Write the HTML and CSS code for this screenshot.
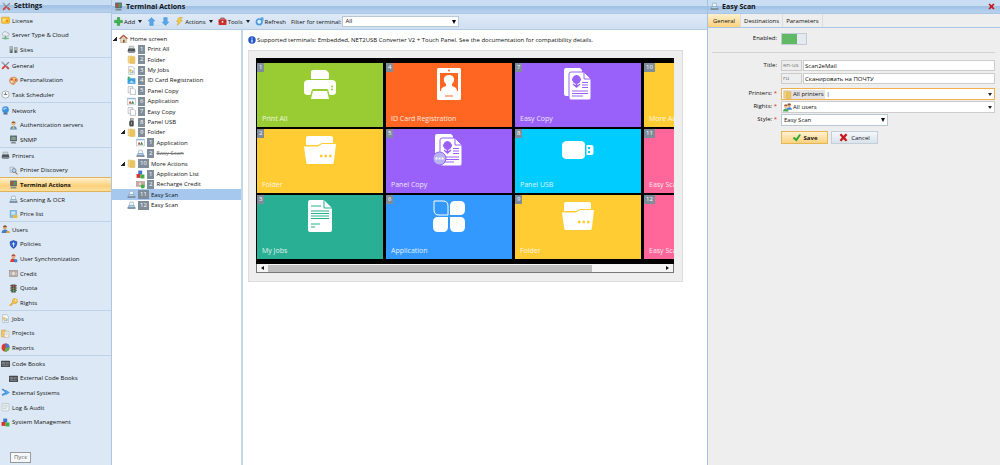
FILE: index.html
```html
<!DOCTYPE html>
<html lang="en">
<head>
<meta charset="utf-8">
<title>Terminal Actions</title>
<link rel="stylesheet" href="styles.css">
</head>
<body>
<svg class="sprite" aria-hidden="true">
  <symbol id="i-tools" viewBox="0 0 16 16"><path d="M2 2l11 12" stroke="#8b96a3" stroke-width="2.6"/><path d="M1 1h3v3H1z" fill="#aab3bd"/><path d="M14 2L8 8" stroke="#7d8894" stroke-width="2.4"/><path d="M8 8l-6 6" stroke="#d9403a" stroke-width="3.2"/><path d="M10 10l4 4" stroke="#c94a3e" stroke-width="3"/></symbol>
  <symbol id="i-license" viewBox="0 0 16 16"><rect x="1" y="2" width="14" height="11" rx="1" fill="#f7c331" stroke="#d99a1b"/><path d="M3 6h5M3 9h4" stroke="#fff3c0" stroke-width="1.5"/><circle cx="11" cy="9" r="2" fill="#e98a1c"/></symbol>
  <symbol id="i-cloud" viewBox="0 0 16 16"><path d="M3 8a3 3 0 0 1 1-5 4 4 0 0 1 7 0 3 3 0 0 1 1 6H4z" fill="#e5eaee" stroke="#8d99a5"/><path d="M8 9v4M2 13h12" stroke="#5da061" stroke-width="1.6"/><rect x="6" y="11" width="4" height="4" fill="#6fb773"/></symbol>
  <symbol id="i-sites" viewBox="0 0 16 16"><path d="M1 2h6v12H1zM9 4h6v10H9z" fill="#8c989c"/><path d="M2 4h4M2 6h4M10 6h4M10 8h4" stroke="#dbe4e6"/><path d="M3 10h2v4H3zM11 10h2v4h-2z" fill="#3e5a42"/></symbol>
  <symbol id="i-palette" viewBox="0 0 16 16"><path d="M8 2c5 0 8 3 7 7-1 2-3 1-4 2s0 4-3 4C4 15 1 12 1 8s3-6 7-6z" fill="#e9a66d" stroke="#b9703c"/><circle cx="5" cy="6" r="1.6" fill="#d63a2e"/><circle cx="9" cy="5" r="1.6" fill="#f8e25e"/><circle cx="12" cy="7" r="1.5" fill="#d74632"/><circle cx="5" cy="10" r="1.5" fill="#fff"/></symbol>
  <symbol id="i-clock" viewBox="0 0 16 16"><circle cx="8" cy="8" r="6.5" fill="#f6f7f8" stroke="#9ba3aa" stroke-width="1.4"/><path d="M8 4v4H5M8 8l3 0" fill="none" stroke="#555" stroke-width="1.3"/></symbol>
  <symbol id="i-globe" viewBox="0 0 16 16"><circle cx="8" cy="6.500" r="6" fill="#3f91dd"/><path d="M4 4c2-2 5-2 7 0-2 2-4 1-5 3-1 1-2-1-2-3z" fill="#9fd1f4"/><path d="M5 12h6l1 3H4z" fill="#5a6f86"/></symbol>
  <symbol id="i-user" viewBox="0 0 16 16"><circle cx="8" cy="4.500" r="3.5" fill="#e7b184"/><path d="M4.500 4c0-4 7-4 7 0-2-1-5-1-7 0z" fill="#7a4a23"/><path d="M2 15c0-8 12-8 12 0z" fill="#4b8ed0"/><path d="M7 9h2l1 5H6z" fill="#f0b23c"/></symbol>
  <symbol id="i-terminal" viewBox="0 0 16 16"><rect x="2" y="1" width="12" height="10" fill="#5c6a70"/><rect x="4" y="3" width="4" height="6" fill="#c8433c"/><rect x="8" y="3" width="4" height="6" fill="#49a05c"/><path d="M4 12h8l2 3H2z" fill="#7f8a90"/></symbol>
  <symbol id="i-snmp" viewBox="0 0 16 16"><rect x="2" y="1" width="12" height="10" fill="#536067"/><rect x="4" y="3" width="8" height="6" fill="#87a191"/><path d="M5 12h6l2 3H3z" fill="#7f8a90"/></symbol>
  <symbol id="i-printer" viewBox="0 0 16 16"><path d="M4 2h8v5H4z" fill="#d6dadd" stroke="#8d9499"/><path d="M2 6h12l1 6H1z" fill="#4f555a"/><path d="M3 11h10l1 3H2z" fill="#8c9297"/></symbol>
  <symbol id="i-discover" viewBox="0 0 16 16"><path d="M2 2h7v9H2z" fill="#dfe7ee" stroke="#8a97a3"/><circle cx="9" cy="8" r="3.500" fill="#b9d8ee" stroke="#66788a" stroke-width="1.4"/><path d="M11 11l4 4" stroke="#a8743c" stroke-width="2"/></symbol>
  <symbol id="i-scanner" viewBox="0 0 16 16"><path d="M5 2l6 0 1 6H4z" fill="#f1f6fa" stroke="#7f99b0"/><path d="M3 7h10l2 6H1z" fill="#8fb2d2"/><path d="M1 11h14v3H1z" fill="#7a8a99"/><path d="M4 10h8" stroke="#e8f4ff"/></symbol>
  <symbol id="i-price" viewBox="0 0 16 16"><rect x="2" y="1" width="11" height="12" fill="#7fc1e8" stroke="#5b9cc5"/><path d="M4 4h7M4 7h7" stroke="#fff" stroke-width="1.5"/><path d="M7 9h8v5H7z" fill="#f2b740"/></symbol>
  <symbol id="i-users" viewBox="0 0 16 16"><circle cx="7" cy="4.500" r="3.300" fill="#e0a06c"/><path d="M3.500 4c0-4 7-4 7 0-2-1-5-1-7 0z" fill="#5f3a1e"/><path d="M1 14c0-8 12-8 12 0z" fill="#3f7fc7"/><path d="M9 14c0-5 7-5 7 0z" fill="#e4a045"/></symbol>
  <symbol id="i-team" viewBox="0 0 16 16"><circle cx="11" cy="4" r="3" fill="#e0a06c"/><path d="M8 3c0-3 6-3 6 0z" fill="#5f3a1e"/><path d="M6 12c0-6 10-6 10 0z" fill="#3f7fc7"/><circle cx="5" cy="6" r="3" fill="#efb787"/><path d="M2 5c0-3 6-3 6 0z" fill="#8b3a20"/><path d="M0 15c0-7 10-7 10 0z" fill="#4da45a"/></symbol>
  <symbol id="i-shield" viewBox="0 0 16 16"><path d="M8 1l6 2c0 6-1 9-6 12C3 12 2 9 2 3z" fill="#2c5fd0" stroke="#1b3f96"/><path d="M8 4v8M5 7h6" stroke="#dce8ff" stroke-width="1.6"/></symbol>
  <symbol id="i-sync" viewBox="0 0 16 16"><circle cx="8" cy="4.500" r="3.500" fill="#e7a67c"/><path d="M4.500 4c0-4 7-4 7 0-2-1-5-1-7 0z" fill="#a33620"/><path d="M2 14c0-8 10-8 11 0z" fill="#d6402f"/><circle cx="12" cy="12" r="3.200" fill="#3f86d8"/></symbol>
  <symbol id="i-credit" viewBox="0 0 16 16"><rect x="1" y="3" width="14" height="10" fill="#b7aaa5" stroke="#90827e"/><circle cx="8" cy="8" r="3" fill="#e4dcd8"/><path d="M3 5v6M13 5v6" stroke="#e4dcd8"/></symbol>
  <symbol id="i-quota" viewBox="0 0 16 16"><rect x="4" y="1" width="8" height="14" rx="1" fill="#454b46"/><path d="M2 3h2M2 7h2M2 11h2M12 3h2M12 7h2M12 11h2" stroke="#454b46" stroke-width="2"/><circle cx="8" cy="4" r="1.800" fill="#e0483c"/><circle cx="8" cy="8" r="1.800" fill="#a1903e"/><circle cx="8" cy="12" r="1.800" fill="#4fba5a"/></symbol>
  <symbol id="i-key" viewBox="0 0 16 16"><circle cx="10.500" cy="5.500" r="4.500" fill="#f6c445" stroke="#d8982a"/><circle cx="12" cy="4" r="1.300" fill="#fff"/><path d="M7 8l-6 6M4 11l2 2" stroke="#e2a62f" stroke-width="2.200"/></symbol>
  <symbol id="i-job" viewBox="0 0 16 16"><path d="M3 1h7l3 3v11H3z" fill="#f8fafb" stroke="#9aa7b2"/><rect x="4" y="6" width="4" height="4" fill="#e9b53c"/><path d="M5 12h6" stroke="#7fae6d" stroke-width="1.400"/><rect x="9" y="8" width="2.500" height="4" fill="#86b3dd"/></symbol>
  <symbol id="i-project" viewBox="0 0 16 16"><path d="M1 2h7v12H1z" fill="#f2ca62" stroke="#cf9c34"/><path d="M6 4h8v11H6z" fill="#f7f3e7" stroke="#b4ad98"/><path d="M8 7h4M8 10h4" stroke="#9cb5cd"/></symbol>
  <symbol id="i-pie" viewBox="0 0 16 16"><circle cx="8" cy="8" r="7" fill="#db3b32"/><path d="M8 8V1a7 7 0 0 1 7 7z" fill="#3f7fdc"/><path d="M8 8h7a7 7 0 0 1-9 7z" fill="#55b84e"/></symbol>
  <symbol id="i-code" viewBox="0 0 16 16"><rect x="0" y="3" width="16" height="11" rx="1" fill="#3c4045"/><path d="M2 5v5M4 5v5M6 5v5M9 5v5M11 5v5M14 5v5M2 12h12" stroke="#c5c9cd"/></symbol>
  <symbol id="i-flow" viewBox="0 0 16 16"><path d="M2 2l8 5M2 13l8-5" stroke="#3e8ad3" stroke-width="3"/><path d="M8 3l8 5-8 5z" fill="#4da2ea"/></symbol>
  <symbol id="i-log" viewBox="0 0 16 16"><path d="M2 1h12v13H2z" fill="#f3f6f6" stroke="#a8b2b8"/><path d="M4 4h8M4 7h8M4 10h6" stroke="#9eb5a9"/></symbol>
  <symbol id="i-cubes" viewBox="0 0 16 16"><path d="M4 1h7v7H4z" fill="#3f73d4"/><path d="M1 7h7v7H1z" fill="#d8322c"/><path d="M8 8h7v7H8z" fill="#3fae49"/></symbol>
  <symbol id="i-plus" viewBox="0 0 16 16"><path d="M6 1h4v5h5v4h-5v5H6v-5H1V6h5z" fill="#39b54a" stroke="#2c8f3a"/></symbol>
  <symbol id="i-up" viewBox="0 0 16 16"><path d="M8 1l6 6h-3v8H5V7H2z" fill="#58a6e8" stroke="#4a95d8"/></symbol>
  <symbol id="i-down" viewBox="0 0 16 16"><path d="M8 15l6-6h-3V1H5v8H2z" fill="#58a6e8" stroke="#4a95d8"/></symbol>
  <symbol id="i-bolt" viewBox="0 0 16 16"><path d="M7 1h6L9 6h4L4 15l2-7H3z" fill="#f8cf45" stroke="#cf9f2b"/></symbol>
  <symbol id="i-box" viewBox="0 0 16 16"><path d="M5 4V2h6v2" fill="none" stroke="#7a2320" stroke-width="1.500"/><rect x="1" y="4" width="14" height="10" rx="1" fill="#cf302a"/><path d="M1 8h14" stroke="#8b1f1b"/><rect x="6.500" y="7" width="3" height="3" fill="#eee"/></symbol>
  <symbol id="i-refresh" viewBox="0 0 16 16"><circle cx="7.500" cy="8.500" r="5" fill="#d9ecfa" stroke="#4a9ade" stroke-width="3"/><path d="M9 1h6v6z" fill="#4a9ade"/></symbol>
  <symbol id="i-home" viewBox="0 0 16 16"><path d="M3 7h10v8H3z" fill="#efe2cc" stroke="#a08360"/><path d="M0 8l8-7 8 7-2 1-6-5-6 5z" fill="#a24e31"/><path d="M7 10h3v5H7z" fill="#80532f"/></symbol>
  <symbol id="i-folder" viewBox="0 0 16 16"><path d="M2 2h7v12H2z" fill="#f5d886" stroke="#d9b265"/><path d="M8 3h6v12H6V5z" fill="#efc45b" stroke="#d9b265"/></symbol>
  <symbol id="i-card" viewBox="0 0 16 16"><rect x="1" y="4" width="14" height="10" fill="#3e9fdd"/><path d="M4 12l4-4 5 4z" fill="#bfe4fa"/><path d="M3 1v5M1 3h5" stroke="#3fb04a" stroke-width="2"/></symbol>
  <symbol id="i-copy" viewBox="0 0 16 16"><path d="M2 1h8v11H2z" fill="#f7f8f9" stroke="#9aa3ab"/><path d="M6 4h6l3 3v8H6z" fill="#fff" stroke="#8c96a0"/></symbol>
  <symbol id="i-app" viewBox="0 0 16 16"><rect x="1" y="2" width="14" height="12" fill="#fff" stroke="#9eb1c2"/><path d="M1 3h14" stroke="#8ab0d8" stroke-width="2"/><path d="M4 12V8h3v4z" fill="#cf3d34"/><path d="M7 12l3-6 3 6z" fill="#4a8e56"/></symbol>
  <symbol id="i-usb" viewBox="0 0 16 16"><rect x="6" y="1" width="5" height="4" fill="#b7bcc0" stroke="#777"/><rect x="4" y="5" width="8" height="10" rx="2" fill="#484b4e"/><path d="M8 7v5" stroke="#ddd"/></symbol>
  <symbol id="i-recharge" viewBox="0 0 16 16"><rect x="1" y="3" width="14" height="8" fill="#c6aca3" stroke="#a08a82"/><circle cx="7" cy="7" r="2" fill="#e9dcd6"/><circle cx="12" cy="11.500" r="3.500" fill="#3fae49"/></symbol>
  <symbol id="i-info" viewBox="0 0 16 16"><circle cx="8" cy="8" r="7.500" fill="#2456c8"/><path d="M8 7v6" stroke="#fff" stroke-width="2.400"/><circle cx="8" cy="4.200" r="1.400" fill="#fff"/></symbol>
  <symbol id="i-check" viewBox="0 0 16 16"><path d="M1 9l4-2 2 3 6-8 3 1-8 12z" fill="#27a52f"/></symbol>
  <symbol id="i-cross" viewBox="0 0 16 16"><path d="M1 3l3-2 4 4 4-4 3 2-4 5 4 5-3 2-4-4-4 4-3-2 4-5z" fill="#c8191e"/></symbol>

  <symbol id="t-print" viewBox="0 0 32 32"><path d="M7 4q0-2 2-2h13l3 3v6H7z" fill="#fff"/><path d="M0 16q0-4 4-4h24q4 0 4 4v8q0 3-4 3h-3l-2-6H9l-2 6H4q-4 0-4-3z" fill="#fff"/><path d="M9 23h14l2 8H7z" fill="#fff"/><path d="M6.500 28l2-6.500h15l2 6.500" fill="none" stroke="#99cc33"/><path d="M7 11.500h18" stroke="#99cc33"/><circle cx="28" cy="18.500" r="1" fill="#99cc33"/><circle cx="28" cy="21.500" r="1" fill="#99cc33"/></symbol>
  <symbol id="t-card" viewBox="0 0 32 32"><rect x="4" y="0" width="24" height="32" rx="1.500" fill="#fff"/><path d="M7 5h18v18H7z" fill="#ff6622"/><path d="M8 23c0-4 3-4 5-5v-2c-4-4-2-9 3-9s7 5 3 9v2c2 1 5 1 5 5z" fill="#fff"/><circle cx="16" cy="2.500" r="1" fill="#ff6622"/><path d="M12 28h8" stroke="#ff6622"/></symbol>
  <symbol id="t-copy" viewBox="0 0 32 32"><path d="M4 0h14l2 2v2H9v24H4q-2 0-2-2V2q0-2 2-2z" fill="#fff"/><path d="M9 4h13l7 7v19q0 2-2 2H9q-2 0-2-2V6q0-2 2-2z" fill="#fff" stroke="#9961fa"/><path d="M22 4v7h7" fill="none" stroke="#9961fa"/><path d="M14.500 7v9M10 11.500h9M11.500 8.500l6 6M17.500 8.500l-6 6" stroke="#9961fa" stroke-width="2.500"/><path d="M14.500 15v5M11 16l3.500 3 3.500-3" fill="none" stroke="#9961fa" stroke-width="1.500"/><path d="M20 14.500h6M20 17h6M20 19.500h6M10 23h16M10 25.500h16M10 28h11" stroke="#9961fa"/></symbol>
  <symbol id="t-panel" viewBox="0 0 32 32"><use href="#t-copy"/><circle cx="6.500" cy="24.500" r="6.500" fill="#b8b4f4" stroke="#9961fa"/><path d="M2.500 24.500h2M5.500 24.500h2M8.500 24.500h2" stroke="#fff" stroke-width="2"/></symbol>
  <symbol id="t-folder" viewBox="0 0 32 32"><path d="M2 4q0-2 2-2h23q2 0 2 2v5H18l-4 2H2z" fill="#fff"/><path d="M0 12.500h14l4-2.500h14l-2 17q0 3-2 3H4q-2 0-2-3z" fill="#fff"/><path d="M16 22h2.500M20.500 22H23M25 22h2.500" stroke="#fc3" stroke-width="2.500"/></symbol>
  <symbol id="t-usb" viewBox="0 0 32 32"><path d="M4 7h16q3 1 3 3v12q0 2-3 3H4q-4-1-4-4V11q0-3 4-4z" fill="#fff"/><path d="M24.500 11h5q2 0 2 2v6q0 2-2 2h-5z" fill="#fff"/><path d="M26 13h2v2h-2zM26 17h2v2h-2z" fill="#00ccff"/></symbol>
  <symbol id="t-job" viewBox="0 0 32 32"><path d="M6 0h14l8 8v22q0 2-2 2H6q-2 0-2-2V2q0-2 2-2z" fill="#fff"/><path d="M20 0v8h8" fill="none" stroke="#29af94"/><path d="M7 6h10M7 11h18M7 13.500h18M7 16h18M7 18.500h18M7 24h9M7 27h4" stroke="#29af94" stroke-width="1.200"/></symbol>
  <symbol id="t-app" viewBox="0 0 32 32"><path d="M1 1h9q5 0 5 5v9H6q-5 0-5-5z" fill="none" stroke="#fff"/><path d="M17 6q0-5 5-5h5q5 0 5 5v4q0 5-5 5H17zM5 17h10v10q0 5-5 5H5q-5 0-5-5v-5q0-5 5-5zM17 17h10q5 0 5 5v5q0 5-5 5h-5q-5 0-5-5z" fill="#fff"/></symbol>
</svg>

<div class="app">
  <aside class="side">
    <h2 class="bar"><svg class="ico"><use href="#i-tools"/></svg>Settings</h2>
    <nav class="nav" aria-label="Settings">
      <ul class="group">
        <li><a href="#"><svg class="ico"><use href="#i-license"/></svg>License</a></li>
        <li><a href="#"><svg class="ico"><use href="#i-cloud"/></svg>Server Type &amp; Cloud</a></li>
        <li class="sub"><a href="#"><svg class="ico"><use href="#i-sites"/></svg>Sites</a></li>
      </ul>
      <ul class="group">
        <li><a href="#"><svg class="ico"><use href="#i-tools"/></svg>General</a></li>
        <li class="sub"><a href="#"><svg class="ico"><use href="#i-palette"/></svg>Personalization</a></li>
        <li><a href="#"><svg class="ico"><use href="#i-clock"/></svg>Task Scheduler</a></li>
      </ul>
      <ul class="group">
        <li><a href="#"><svg class="ico"><use href="#i-globe"/></svg>Network</a></li>
        <li class="sub"><a href="#"><svg class="ico"><use href="#i-user"/></svg>Authentication servers</a></li>
        <li class="sub"><a href="#"><svg class="ico"><use href="#i-snmp"/></svg>SNMP</a></li>
      </ul>
      <ul class="group">
        <li><a href="#"><svg class="ico"><use href="#i-printer"/></svg>Printers</a></li>
        <li class="sub"><a href="#"><svg class="ico"><use href="#i-discover"/></svg>Printer Discovery</a></li>
        <li class="sub current"><a href="#" aria-current="page"><svg class="ico"><use href="#i-terminal"/></svg>Terminal Actions</a></li>
        <li class="sub"><a href="#"><svg class="ico"><use href="#i-scanner"/></svg>Scanning &amp; OCR</a></li>
        <li class="sub"><a href="#"><svg class="ico"><use href="#i-price"/></svg>Price list</a></li>
      </ul>
      <ul class="group">
        <li><a href="#"><svg class="ico"><use href="#i-users"/></svg>Users</a></li>
        <li class="sub"><a href="#"><svg class="ico"><use href="#i-shield"/></svg>Policies</a></li>
        <li class="sub"><a href="#"><svg class="ico"><use href="#i-sync"/></svg>User Synchronization</a></li>
        <li class="sub"><a href="#"><svg class="ico"><use href="#i-credit"/></svg>Credit</a></li>
        <li class="sub"><a href="#"><svg class="ico"><use href="#i-quota"/></svg>Quota</a></li>
        <li class="sub"><a href="#"><svg class="ico"><use href="#i-key"/></svg>Rights</a></li>
      </ul>
      <ul class="group">
        <li><a href="#"><svg class="ico"><use href="#i-job"/></svg>Jobs</a></li>
        <li><a href="#"><svg class="ico"><use href="#i-project"/></svg>Projects</a></li>
        <li><a href="#"><svg class="ico"><use href="#i-pie"/></svg>Reports</a></li>
      </ul>
      <ul class="group">
        <li><a href="#"><svg class="ico"><use href="#i-code"/></svg>Code Books</a></li>
        <li class="sub"><a href="#"><svg class="ico"><use href="#i-code"/></svg>External Code Books</a></li>
        <li><a href="#"><svg class="ico"><use href="#i-flow"/></svg>External Systems</a></li>
        <li><a href="#"><svg class="ico"><use href="#i-log"/></svg>Log &amp; Audit</a></li>
        <li><a href="#"><svg class="ico"><use href="#i-cubes"/></svg>System Management</a></li>
      </ul>
    </nav>
    <button class="start" type="button">Пуск</button>
  </aside>

  <main class="main">
    <h1 class="bar"><svg class="ico"><use href="#i-terminal"/></svg>Terminal Actions</h1>
    <div class="toolbar">
      <button type="button"><svg class="ico"><use href="#i-plus"/></svg>Add<i class="caret"></i></button>
      <button type="button" aria-label="Move up"><svg class="ico"><use href="#i-up"/></svg></button>
      <button type="button" aria-label="Move down"><svg class="ico"><use href="#i-down"/></svg></button>
      <button type="button"><svg class="ico"><use href="#i-bolt"/></svg>Actions<i class="caret"></i></button>
      <button type="button"><svg class="ico"><use href="#i-box"/></svg>Tools<i class="caret"></i></button>
      <button type="button"><svg class="ico"><use href="#i-refresh"/></svg>Refresh</button>
      <div class="filter">
        <label for="filter">Filter for terminal:</label>
        <span class="pick"><select id="filter"><option>All</option></select></span>
      </div>
    </div>
    <div class="split">
      <ul class="tree">
        <li><a href="#" class="l0"><i class="twist"></i><svg class="ico"><use href="#i-home"/></svg>Home screen</a></li>
        <li><a href="#" class="l1"><i class="twist none"></i><svg class="ico"><use href="#i-printer"/></svg><b>1</b>Print All</a></li>
        <li><a href="#" class="l1"><i class="twist none"></i><svg class="ico"><use href="#i-folder"/></svg><b>2</b>Folder</a></li>
        <li><a href="#" class="l1"><i class="twist none"></i><svg class="ico"><use href="#i-job"/></svg><b>3</b>My Jobs</a></li>
        <li><a href="#" class="l1"><i class="twist none"></i><svg class="ico"><use href="#i-card"/></svg><b>4</b>ID Card Registration</a></li>
        <li><a href="#" class="l1"><i class="twist none"></i><svg class="ico"><use href="#i-copy"/></svg><b>5</b>Panel Copy</a></li>
        <li><a href="#" class="l1"><i class="twist none"></i><svg class="ico"><use href="#i-app"/></svg><b>6</b>Application</a></li>
        <li><a href="#" class="l1"><i class="twist none"></i><svg class="ico"><use href="#i-copy"/></svg><b>7</b>Easy Copy</a></li>
        <li><a href="#" class="l1"><i class="twist none"></i><svg class="ico"><use href="#i-usb"/></svg><b>8</b>Panel USB</a></li>
        <li><a href="#" class="l1"><i class="twist"></i><svg class="ico"><use href="#i-folder"/></svg><b>9</b>Folder</a></li>
        <li><a href="#" class="l2"><i class="twist none"></i><svg class="ico"><use href="#i-app"/></svg><b>1</b>Application</a></li>
        <li><a href="#" class="l2 off"><i class="twist none"></i><svg class="ico"><use href="#i-scanner"/></svg><b>2</b><s>Easy Scan</s></a></li>
        <li><a href="#" class="l1"><i class="twist"></i><svg class="ico"><use href="#i-folder"/></svg><b>10</b>More Actions</a></li>
        <li><a href="#" class="l2"><i class="twist none"></i><svg class="ico"><use href="#i-cubes"/></svg><b>1</b>Application List</a></li>
        <li><a href="#" class="l2"><i class="twist none"></i><svg class="ico"><use href="#i-recharge"/></svg><b>2</b>Recharge Credit</a></li>
        <li><a href="#" class="l1 selected"><i class="twist none"></i><svg class="ico"><use href="#i-scanner"/></svg><b>11</b>Easy Scan</a></li>
        <li><a href="#" class="l1"><i class="twist none"></i><svg class="ico"><use href="#i-scanner"/></svg><b>12</b>Easy Scan</a></li>
      </ul>
      <section class="stage">
        <p class="note"><svg class="ico"><use href="#i-info"/></svg>Supported terminals: Embedded, NET2USB Converter V2 + Touch Panel. See the documentation for compatibility details.</p>
        <div class="device">
          <div class="tiles">
            <a href="#" class="tile green"><b>1</b><svg><use href="#t-print"/></svg><span>Print All</span></a>
            <a href="#" class="tile yellow"><b>2</b><svg><use href="#t-folder"/></svg><span>Folder</span></a>
            <a href="#" class="tile teal"><b>3</b><svg><use href="#t-job"/></svg><span>My Jobs</span></a>
            <a href="#" class="tile orange"><b>4</b><svg><use href="#t-card"/></svg><span>ID Card Registration</span></a>
            <a href="#" class="tile violet"><b>5</b><svg><use href="#t-panel"/></svg><span>Panel Copy</span></a>
            <a href="#" class="tile blue"><b>6</b><svg><use href="#t-app"/></svg><span>Application</span></a>
            <a href="#" class="tile violet"><b>7</b><svg><use href="#t-copy"/></svg><span>Easy Copy</span></a>
            <a href="#" class="tile cyan"><b>8</b><svg><use href="#t-usb"/></svg><span>Panel USB</span></a>
            <a href="#" class="tile yellow"><b>9</b><svg><use href="#t-folder"/></svg><span>Folder</span></a>
            <a href="#" class="tile yellow"><b>10</b><svg></svg><span>More Actions</span></a>
            <a href="#" class="tile pink"><b>11</b><svg></svg><span>Easy Scan</span></a>
            <a href="#" class="tile pink"><b>12</b><svg></svg><span>Easy Scan</span></a>
          </div>
          <div class="scroll"><i class="arrow left"></i><i class="thumb"></i><i class="arrow right"></i></div>
        </div>
      </section>
    </div>
  </main>

  <section class="detail">
    <h2 class="bar"><svg class="ico"><use href="#i-scanner"/></svg>Easy Scan<button class="close" type="button" aria-label="Close"><svg><use href="#i-cross"/></svg></button></h2>
    <div class="tabs" role="tablist">
      <button type="button" role="tab" aria-selected="true">General</button>
      <button type="button" role="tab" aria-selected="false">Destinations</button>
      <button type="button" role="tab" aria-selected="false">Parameters</button>
    </div>
    <form class="form">
      <div class="row enabled">
        <label for="enabled">Enabled:</label>
        <input id="enabled" class="toggle" type="checkbox" role="switch" checked>
      </div>
      <div class="row">
        <label for="title-en">Title:</label>
        <div class="titles">
          <span class="lang">en-us</span><input id="title-en" type="text" value="Scan2eMail">
          <span class="lang">ru</span><input type="text" aria-label="Title, ru" value="Сканировать на ПОЧТУ">
        </div>
      </div>
      <div class="row">
        <label for="printers">Printers: <em>*</em></label>
        <div class="combo focus"><span class="chip"><svg class="ico"><use href="#i-folder"/></svg>All printers</span><input id="printers" type="text" value="|"><i class="caret"></i></div>
      </div>
      <div class="row">
        <label for="rights">Rights: <em>*</em></label>
        <div class="combo"><span class="chip"><svg class="ico"><use href="#i-team"/></svg>All users</span><input id="rights" type="text"><i class="caret"></i></div>
      </div>
      <div class="row">
        <label for="style">Style: <em>*</em></label>
        <span class="pick style"><select id="style"><option>Easy Scan</option></select></span>
      </div>
      <div class="actions">
        <button type="submit" class="save"><svg class="ico"><use href="#i-check"/></svg>Save</button>
        <button type="button"><svg class="ico"><use href="#i-cross"/></svg>Cancel</button>
      </div>
    </form>
  </section>
</div>
</body>
</html>
```
FILE: styles.css
```css
* { box-sizing: border-box; }

body {
  margin: 0;
  font: 6px/10px "Open Sans", "Noto Sans", sans-serif;
  color: #111;
  background: #fff;
}

ul, p, h1, h2 { margin: 0; padding: 0; list-style: none; }
a { color: inherit; text-decoration: none; }
button, input, select { font: inherit; color: inherit; margin: 0; padding: 0; border: 0; background: none; }
.sprite { display: none; }
.ico { width: 9px; height: 9px; flex: none; display: block; }

.app {
  display: grid;
  grid-template-columns: 112px 1fr 293px;
  min-height: 100vh;
}

.bar {
  display: flex;
  align-items: center;
  gap: 3px;
  height: 14px;
  padding: 0 5px 0 2px;
  font-size: 7px;
  font-weight: 700;
  background: linear-gradient(#c9ddf3 0 45%, #9ec0e4 46%, #b9d3ee);
  border-bottom: 1px solid #a9c6e6;
}

/* Settings navigation */
.side {
  display: flex;
  flex-direction: column;
  background: #dce8f6;
  border-right: 1px solid #aec6de;
}
.side .bar { height: 13px; }
.group + .group { border-top: 1px solid #bfd3e8; }
.group li { height: 15px; }
.group li:nth-child(3n + 2) { height: 14px; }
.group a { display: flex; align-items: center; gap: 2px; height: 100%; padding-left: 1px; }
.group .sub a { padding-left: 9px; }
.current { background: linear-gradient(#fff0cf, #fbd17c 60%, #fddf9c); border: solid #e0b25c; border-width: 1px 0; font-weight: 700; }
.start {
  align-self: flex-start;
  margin: auto 0 2px 10px;
  height: 11px;
  padding: 0 3px;
  line-height: 9px;
  border: 1px solid #999;
  background: #f6f7f9;
  color: #666;
}

/* Terminal actions */
.main { display: flex; flex-direction: column; min-width: 0; }
.toolbar {
  display: flex;
  align-items: center;
  gap: 5px;
  height: 16px;
  padding: 0 2px;
  background: linear-gradient(#dfeaf7, #cfdff1);
  border-bottom: 1px solid #b4cbe4;
}
.toolbar button { display: flex; align-items: center; gap: 1px; }
.caret { flex: none; margin-left: 2px; border: 2px solid transparent; border-top: 3px solid #222; border-bottom: 0; }

.pick { display: flex; position: relative; width: 117px; height: 11px; background: #fff; border: 1px solid #b9c6d3; }
.pick::after { content: ""; position: absolute; right: 2px; top: 3px; border: 2px solid transparent; border-top: 4px solid #000; border-bottom: 0; }
.pick select { appearance: none; width: 100%; padding: 0 2px; line-height: 9px; }
.filter { display: flex; align-items: center; gap: 1px; }

.split { display: grid; grid-template-columns: 131px 1fr; flex: 1; }
.tree { padding-top: 3px; border-right: 2px solid #c4d6e9; }
.tree li { height: 10px; }
.tree li:nth-child(5n + 1), .tree li:nth-child(5n + 3) { height: 11px; }
.tree a { display: flex; align-items: center; gap: 2px; height: 100%; padding-left: 1px; }
.tree .l1 { padding-left: 9px; }
.tree .l2 { padding-left: 18px; }
.tree .selected { background: #a6c8ef; }
.tree .off { color: #777; }
.twist { flex: none; width: 4px; height: 4px; background: linear-gradient(135deg, transparent 50%, #222 50%); }
.twist.none { visibility: hidden; }
.tree b, .tile b {
  min-width: 7px;
  padding: 0 2px;
  background: #7f8c9a;
  color: #fff;
  font-weight: 400;
  line-height: 9px;
  text-align: center;
}

.stage { padding: 5px 24px 5px 5px; min-width: 0; }
.note { display: flex; align-items: center; gap: 1px; height: 10px; }
.note .ico { width: 8px; height: 8px; }
.device { margin-top: 5px; padding: 7px 8px 8px 7px; background: #eee; border: 1px solid #ddd; }
.tiles {
  display: grid;
  grid-template-rows: repeat(3, 64px);
  grid-auto-flow: column;
  grid-auto-columns: 126px;
  gap: 2px 3px;
  padding: 5px 1px;
  background: #000;
  overflow: hidden;
}
.tile { display: flex; flex-direction: column; align-items: center; position: relative; color: #fff; font-size: 7px; padding: 5px 5px 3px; }
.tile b { position: absolute; left: 0; top: 0; font-size: 6px; }
.tile svg { width: 32px; height: 32px; }
.tile span { margin-top: auto; align-self: flex-start; white-space: nowrap; line-height: 11px; opacity: .85; }
.green { background: #9c3; }
.yellow { background: #fc3; }
.teal { background: #29af94; }
.orange { background: #f62; }
.violet { background: #9961fa; }
.blue { background: #39f; }
.cyan { background: #0cf; }
.pink { background: #f69; }

.scroll { display: flex; align-items: center; height: 9px; background: #f4f4f4; border: 1px solid #777; border-top: 0; }
.thumb { width: 78%; height: 7px; background: #bfbfbf; }
.arrow { width: 11px; flex: none; }
.arrow::before { content: ""; display: block; margin: auto; width: 0; border: 2px solid transparent; }
.left::before { border-right: 3px solid #111; border-left: 0; }
.right { margin-left: auto; }
.right::before { border-left: 3px solid #111; border-right: 0; }

/* Action details */
.detail { background: #eee; border-left: 1px solid #a4c2e0; }
.close { margin-left: auto; }
.close svg { display: block; width: 7px; height: 7px; }
.tabs { display: flex; height: 14px; border-bottom: 1px solid #a9c6e6; }
.tabs button { padding: 0 3px; border-right: 1px solid #ddd; }
.tabs [aria-selected="true"] { padding: 0 5px; background: linear-gradient(#fff0cf, #fbd17c); }

.form { display: flex; flex-direction: column; gap: 1px; padding: 5px 5px 5px 4px; }
.row { display: grid; grid-template-columns: 65px 1fr; column-gap: 4px; }
.row label { text-align: right; line-height: 11px; }
.row em { color: #d22; font-style: normal; }
.enabled { padding-bottom: 7px; margin-bottom: 6px; border-bottom: 1px solid #d2d2d2; }
.toggle { appearance: none; width: 26px; height: 12px; border: 1px solid #c3ccd4; background: linear-gradient(90deg, #61b865 15px, #e3eaf1 15px); }
.titles { display: grid; grid-template-columns: 21px 1fr; gap: 2px 1px; margin-bottom: 3px; }
.lang { height: 11px; line-height: 9px; padding: 0 1px; border: 1px solid #ccc; color: #777; }
.titles input { min-width: 0; height: 11px; padding: 0 1px; border: 1px solid #ccc; background: #fff; }
.combo { display: flex; align-items: center; height: 12px; padding: 0 2px 0 1px; background: #fff; border: 1px solid #ccc; }
.combo.focus { border-color: #efb04f; }
.combo input { flex: 1; min-width: 0; padding-left: 2px; outline: 0; }
.chip { display: flex; align-items: center; gap: 1px; height: 9px; padding-right: 1px; }
.focus .chip { background: #e2e2e2; }
.style { width: 107px; height: 12px; }
.actions { display: flex; gap: 3px; margin: 4px 0 0 69px; }
.actions button {
  display: flex;
  align-items: center;
  justify-content: center;
  gap: 3px;
  width: 47px;
  height: 13px;
  border: 1px solid #c3ced9;
  background: linear-gradient(#f4f8fb, #d9e3ec);
}
.actions .save { font-weight: 700; border-color: #e6b759; background: linear-gradient(#fff1d0, #fbd27e); }
```
